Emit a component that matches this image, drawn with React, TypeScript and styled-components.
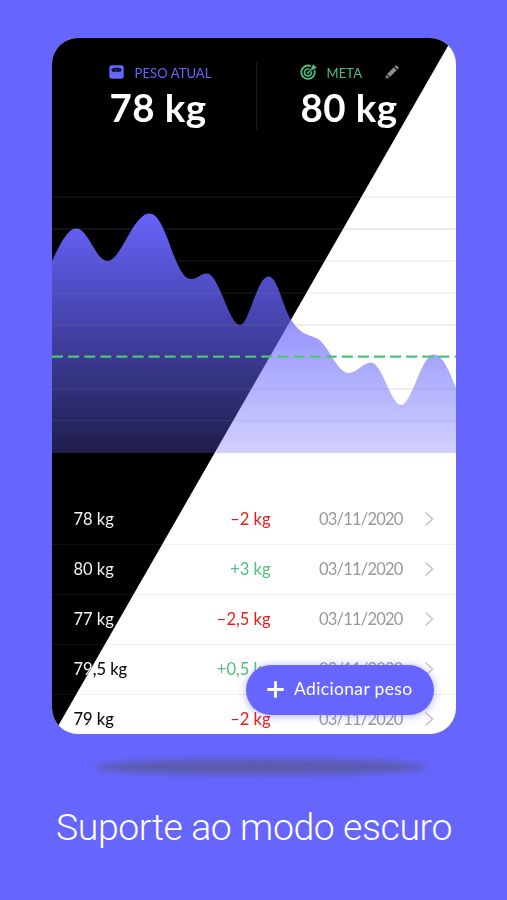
import React from "react";
import styled, { createGlobalStyle } from "styled-components";

const GlobalStyle = createGlobalStyle`
  * { box-sizing: border-box; }
  body { margin: 0; background: #6666ff; }
`;

const Page = styled.main`
  width: 507px;
  height: 900px;
  padding: 38px 51px 0 52px;
  overflow: hidden;
  background: #6666ff;
  font-family: Lato, "Open Sans", sans-serif;
`;

const Phone = styled.section`
  position: relative;
  isolation: isolate;
  width: 404px;
  height: 696px;
  overflow: hidden;
  border-radius: 26px;
  background: #fff;

  &::before {
    content: "";
    position: absolute;
    inset: 0;
    z-index: -1;
    background: #000;
    clip-path: polygon(0 0, 400.5px 0, 1.5px 100%, 0 100%);
  }
`;

const Summary = styled.header`
  display: flex;
  height: 148px;
  padding-top: 24px;
`;

const Stat = styled.div<{ $inset: number }>`
  width: ${(p) => (p.$inset > 50 ? 204 : 198)}px;
  padding-left: ${(p) => p.$inset}px;
`;

const StatHead = styled.div<{ $color: string }>`
  display: flex;
  align-items: center;
  height: 20px;
  color: ${(p) => p.$color};
`;

const StatLabel = styled.span<{ $gap: number }>`
  margin-left: ${(p) => p.$gap}px;
  margin-top: 2px;
  font-size: 13px;
  line-height: 20px;
  letter-spacing: 0.1px;
  white-space: nowrap;
`;

const StatValue = styled.div`
  margin-top: 2px;
  padding-left: 1px;
  color: #fff;
  font-size: 38.5px;
  font-weight: 700;
  line-height: 46px;
  letter-spacing: 0.4px;
  white-space: nowrap;
`;

const EditButton = styled.span`
  display: flex;
  margin-left: 23px;
`;

const Divider = styled.div`
  width: 1px;
  height: 68px;
  background: #1c1c1c;
`;

const Chart = styled.svg`
  display: block;
  width: 404px;
  height: 270px;
`;

const History = styled.ul`
  margin: 38.5px 0 0;
  padding: 0;
  list-style: none;
`;

const Entry = styled.li`
  display: grid;
  grid-template-columns: 60px 137px 84px 1fr;
  align-items: center;
  height: 50px;
  padding: 0 22px 0.5px 21.5px;
  border-bottom: 1px solid rgba(128, 128, 128, 0.12);
  font-size: 16.5px;
  white-space: nowrap;
`;

const Weight = styled.span`
  color: #f2f2f2;
  mix-blend-mode: difference;
`;

const Delta = styled.span<{ $gain: boolean }>`
  justify-self: end;
  color: ${(p) => (p.$gain ? "#4cc27c" : "#f01818")};
`;

const DateText = styled.time`
  margin-left: 48.5px;
  color: #999;
  letter-spacing: -0.8px;
`;

const Chevron = styled.svg`
  justify-self: end;
  width: 10px;
  height: 16px;
`;

const AddButton = styled.button`
  position: absolute;
  right: 22px;
  bottom: 19.5px;
  display: flex;
  align-items: center;
  width: 188.5px;
  height: 50px;
  padding: 0 0 0 21px;
  border: 0;
  border-radius: 25px;
  background: #6666ff;
  box-shadow: 0 1px 8px rgba(80, 80, 240, 0.45);
  color: #fff;
  font-family: inherit;
  font-size: 17.5px;
  letter-spacing: 0.35px;
  white-space: nowrap;
`;

const AddLabel = styled.span`
  margin-left: 10.5px;
  margin-bottom: 2px;
`;

const GroundShadow = styled.div`
  width: 334px;
  height: 16px;
  margin: 25px 0 0 42px;
  border-radius: 50%;
  background: #5b5bae;
  filter: blur(3px);
`;

const Caption = styled.h1`
  margin: 29px -20px 0;
  color: #fff;
  font-family: Roboto, sans-serif;
  font-size: 37.4px;
  font-weight: 300;
  line-height: 46px;
  letter-spacing: -0.4px;
  text-align: center;
  white-space: nowrap;
`;

const entries = [
  { weight: "78 kg", delta: "–2 kg" },
  { weight: "80 kg", delta: "+3 kg" },
  { weight: "77 kg", delta: "–2,5 kg" },
  { weight: "79,5 kg", delta: "+0,5 kg" },
  { weight: "79 kg", delta: "–2 kg" },
];

const gridLines = [
  { y: 11, strength: 0.15 },
  { y: 43, strength: 0.2 },
  { y: 75, strength: 0.13 },
  { y: 107, strength: 0.15 },
  { y: 139, strength: 0.18 },
  { y: 203, strength: 0.18 },
  { y: 234.5, strength: 0.13 },
];

const curve =
  "M0 75 C8 59 15 42.5 24.5 42.5 C36 42.5 44 75 55.5 75 C69 75 81 27.5 97.5 27.5 C115 27.5 122 93 139 93 C146 93 148 87.5 155 87.5 C167 87.5 177 139 188 139 C197 139 205 90.5 216.5 90.5 C226 90.5 231 123 240 135 C250 150 257 148 266 153 C277 160 285 187 297 187 C305 187 311 176.5 319 176.5 C330 176.5 339 219 349 219 C360 219 369 168.5 382 168.5 C391 168.5 398 187 404 202 V267 H0 Z";

function ScaleIcon() {
  return (
    <svg width="15" height="14" viewBox="0 0 15 14">
      <rect x="0.3" y="0.3" width="14.4" height="13.4" rx="2.4" fill="#6666ff" />
      <path d="M2.3 4.6C3.3 2 11.7 2 12.7 4.6L11.4 6.7H3.6Z" fill="#080818" />
      <path d="M4.5 4.2l.6.8M7 3.6l.4 2.6M10.3 4.2l-.6.8" stroke="#6666ff" strokeWidth="0.7" />
    </svg>
  );
}

function TargetIcon() {
  return (
    <svg width="17" height="17" viewBox="0 0 17 17" fill="none" stroke="#4cc27c" strokeWidth="1.8">
      <path d="M10.7 2.1A6.7 6.7 0 1 0 14.4 6.2" />
      <path d="M9.4 5.3A3.5 3.5 0 1 0 11.3 7.4" strokeWidth="1.6" />
      <path d="M8 8.8L13 3.9" strokeWidth="1.4" />
      <path d="M11.6 5.4V2.6L14.1.3l.6 2 2 .6-2.3 2.5Z" fill="#4cc27c" stroke="none" />
      <circle cx="8" cy="8.8" r="1" fill="#4cc27c" stroke="none" />
    </svg>
  );
}

function PencilIcon() {
  return (
    <svg width="14" height="14" viewBox="0 0 14 14" fill="#8c8c8c">
      <path d="M.5 13.5l.8-3.7 2.9 2.9Z M2 9.1L8.8 2.3l2.9 2.9L4.9 12Z M9.5 1.6l.8-.8c.5-.5 1.1-.5 1.6 0l1.3 1.3c.5.5.5 1.1 0 1.6l-.8.8Z" />
    </svg>
  );
}

export default function App() {
  return (
    <Page>
      <GlobalStyle />
      <Phone>
        <Summary>
          <Stat $inset={56.5}>
            <StatHead $color="#6666ff">
              <ScaleIcon />
              <StatLabel $gap={11}>PESO ATUAL</StatLabel>
            </StatHead>
            <StatValue>78 kg</StatValue>
          </Stat>
          <Divider />
          <Stat $inset={42.5}>
            <StatHead $color="#4cc27c">
              <TargetIcon />
              <StatLabel $gap={10}>META</StatLabel>
              <EditButton>
                <PencilIcon />
              </EditButton>
            </StatHead>
            <StatValue>80 kg</StatValue>
          </Stat>
        </Summary>

        <Chart viewBox="0 0 404 270">
          <defs>
            <linearGradient id="area" gradientUnits="userSpaceOnUse" x1="0" y1="27" x2="0" y2="267">
              <stop offset="0" stopColor="#6663fc" />
              <stop offset="1" stopColor="#6663fc" stopOpacity="0.3" />
            </linearGradient>
          </defs>
          <path d={curve} fill="url(#area)" />
          {gridLines.map(({ y, strength }) => (
            <line key={y} x1="0" x2="404" y1={y} y2={y} stroke="#808090" strokeOpacity={strength} strokeWidth="1.5" />
          ))}
          <line x1="0" x2="404" y1="170.6" y2="170.6" stroke="#4cc27c" strokeWidth="2.2" strokeDasharray="11 5.1" />
        </Chart>

        <History>
          {entries.map((entry) => (
            <Entry key={entry.weight}>
              <Weight>{entry.weight}</Weight>
              <Delta $gain={entry.delta.startsWith("+")}>{entry.delta}</Delta>
              <DateText>03/11/2020</DateText>
              <Chevron viewBox="0 0 10 16" fill="none" stroke="#c8c8cc" strokeWidth="1.7">
                <path d="M1.5 1.5L8.5 8L1.5 14.5" />
              </Chevron>
            </Entry>
          ))}
        </History>

        <AddButton>
          <svg width="17" height="17" viewBox="0 0 17 17" stroke="#fff" strokeWidth="2.8">
            <path d="M8.5 .3V16.7M.3 8.5H16.7" />
          </svg>
          <AddLabel>Adicionar peso</AddLabel>
        </AddButton>
      </Phone>
      <GroundShadow />
      <Caption>Suporte ao modo escuro</Caption>
    </Page>
  );
}
